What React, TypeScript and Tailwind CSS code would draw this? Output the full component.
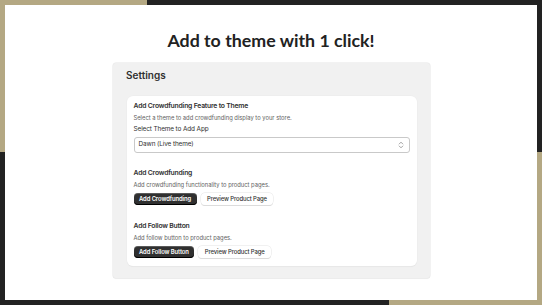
import React from "react";

const font = { fontFamily: "Inter, 'Noto Sans', sans-serif" };

function Chevrons() {
  return (
    <svg width="6" height="8" viewBox="0 0 6 8" fill="none" stroke="#8a8a8a" strokeWidth="0.8" strokeLinecap="round" strokeLinejoin="round">
      <path d="M1.2 3 L3 1.2 L4.8 3" />
      <path d="M1.2 5 L3 6.8 L4.8 5" />
    </svg>
  );
}

function DarkButton({ children }: { children: React.ReactNode }) {
  return (
    <button className="h-[12.5px] px-[5.5px] rounded-[4px] bg-[#303030] text-white text-[5.9px] tracking-[-0.1px] font-semibold leading-none shadow-[inset_0_-1px_0_#000,inset_0_1px_0_rgba(255,255,255,0.2)]">
      {children}
    </button>
  );
}

function LightButton({ children }: { children: React.ReactNode }) {
  return (
    <button className="h-[12.5px] px-[6.5px] rounded-[4px] bg-white text-[#303030] text-[5.9px] tracking-[-0.1px] font-medium leading-none shadow-[0_0_0_0.5px_#e3e3e3,0_1px_0_#d4d4d4]">
      {children}
    </button>
  );
}

const heading = "text-[6.8px] tracking-[-0.2px] leading-[10px] font-semibold text-[#303030]";
const desc = "text-[5.8px] leading-[8px] text-[#616161]";

export default function App() {
  return (
    <div className="relative w-[542px] h-[305px] bg-[#222222] p-[5px] overflow-hidden">
      <div className="absolute left-0 top-0 w-[147px] h-[152px] bg-[#b4a883]" />
      <div className="absolute left-[389px] top-[152px] w-[153px] h-[153px] bg-[#b4a883]" />
      <div className="relative h-full bg-white flex flex-col items-center pt-[21px]" style={font}>
        <h1
          className="text-[17.8px] leading-[28px] font-bold text-[#222222]"
          style={{ fontFamily: "Lato, 'Noto Sans', sans-serif" }}
        >
          Add to theme with 1 click!
        </h1>
        <div className="mt-[9px] w-[317px] bg-[#f1f1f1] rounded-[3px] shadow-[0_0_0_0.5px_#e6e6e6,0_1px_1px_rgba(0,0,0,0.06)] pl-[14.5px] pr-[12.5px] pt-[4.5px] pb-[12.5px]">
          <div className="text-[10px] leading-[14px] font-semibold text-[#303030] mb-[14px] -ml-px">Settings</div>
          <div className="bg-white rounded-[6px] shadow-[0_0_0_0.5px_#ebebeb,0_1px_1px_rgba(0,0,0,0.06)] pl-[6.5px] pr-[7px] pt-[5.5px] pb-[7.5px] flex flex-col">
            <div className={heading}>Add Crowdfunding Feature to Theme</div>
            <div className={`mt-[3px] ${desc}`}>Select a theme to add crowdfunding display to your store.</div>
            <div className="mt-[3px] text-[6.4px] tracking-[-0.1px] leading-[9px] text-[#303030]">Select Theme to Add App</div>
            <div className="mt-[2.5px] h-[16px] rounded-[3px] border border-[#c9c9c9] flex items-center justify-between pl-[4px] pr-[5px]">
              <span className="text-[6.4px] tracking-[-0.1px] text-[#303030]">Dawn (Live theme)</span>
              <Chevrons />
            </div>

            <div className={`mt-[15px] ${heading}`}>Add Crowdfunding</div>
            <div className={`mt-[3px] ${desc}`}>Add crowdfunding functionality to product pages.</div>
            <div className="mt-[4px] flex gap-[4px]">
              <DarkButton>Add Crowdfunding</DarkButton>
              <LightButton>Preview Product Page</LightButton>
            </div>

            <div className={`mt-[15.5px] ${heading}`}>Add Follow Button</div>
            <div className={`mt-[3.5px] ${desc}`}>Add follow button to product pages.</div>
            <div className="mt-[3.5px] flex gap-[4px]">
              <DarkButton>Add Follow Button</DarkButton>
              <LightButton>Preview Product Page</LightButton>
            </div>
          </div>
        </div>
      </div>
    </div>
  );
}
